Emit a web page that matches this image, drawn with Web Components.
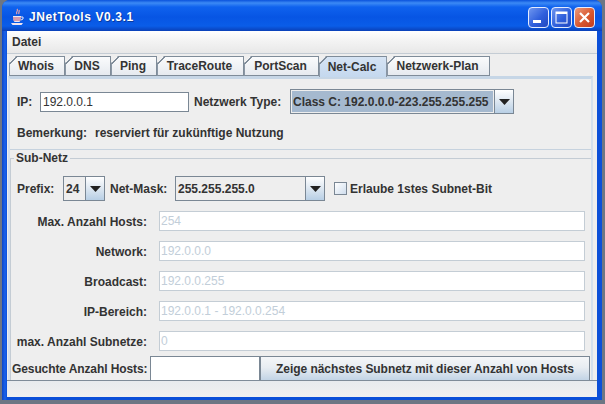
<!DOCTYPE html>
<html>
<head>
<meta charset="utf-8">
<style>
  html, body { margin: 0; height: 100%; }
  body { width: 605px; height: 404px; overflow: hidden; background: #6d7684; font: bold 12px "Liberation Sans", Arial, sans-serif; color: #333; }
</style>
</head>
<body>
<jn-window label="JNetTools V0.3.1">
  <jn-menubar>Datei</jn-menubar>
  <jn-tabs>
    <jn-tab w="56">Whois</jn-tab>
    <jn-tab w="46">DNS</jn-tab>
    <jn-tab w="46">Ping</jn-tab>
    <jn-tab w="87">TraceRoute</jn-tab>
    <jn-tab w="75">PortScan</jn-tab>
    <jn-tab w="68" selected>Net-Calc</jn-tab>
    <jn-tab w="103">Netzwerk-Plan</jn-tab>
  </jn-tabs>
  <jn-netcalc></jn-netcalc>
  <jn-statusbar></jn-statusbar>
</jn-window>

<script>
// title bar + window frame
class JnWindow extends HTMLElement {
  constructor() {
    super();
    const root = this.attachShadow({ mode: "open" });
    root.innerHTML = `
      <style>
        :host { display: flex; flex-direction: column; box-sizing: border-box; width: 600px; height: 400px; margin-left: 2px;
          background: linear-gradient(90deg, #0b46c8 0, #1a63ea 3px, #0b4fd8 5px, #0b4fd8 100%); border-radius: 8px 8px 0 0; padding: 0 5px 3px 5px; }
        .bar { height: 31px; flex: none; margin: 0 -5px; padding: 3px 7px 0 8px; box-sizing: border-box; display: flex; align-items: center; gap: 4px; border-radius: 8px 8px 0 0;
          background: linear-gradient(180deg, #0a52dc 0, #3c8af5 3px, #0f62ee 7px, #0755e4 17px, #0a5de8 26px, #0a40b8 31px); }
        .title { color: #fff; font: bold 12px "Liberation Sans", Arial, sans-serif; letter-spacing: .6px; flex: 1; text-shadow: 1px 1px 0 #0a3a9c; }
        .btn { width: 21px; height: 21px; box-sizing: border-box; border: 1px solid #e4ecff; border-radius: 4px; display: flex; margin-left: -2px;
          background: linear-gradient(135deg, #6f96ef, #2f5fdc 55%, #2148c0); }
        .btn.close { background: linear-gradient(135deg, #eb9a7c, #d9582f 55%, #c13c1e); }
        svg { display: block; }
        .client { flex: 1; min-height: 0; display: flex; flex-direction: column; background: #eee; overflow: hidden; }
      </style>
      <div class="bar">
        <svg width="15" height="18" viewBox="0 0 15 18">
          <path d="M7 1c2 2-2 3 0 5M9 2c1 2-1 2 0 4" fill="none" stroke="#e8a0a8" stroke-width="1.2"/>
          <path d="M3 8h8v1c0 3-1 5-2 5H5c-1 0-2-2-2-5z" fill="#e9e6f4"/>
          <path d="M3 10h8M3.5 12h7" stroke="#c0506a" stroke-width="1"/>
          <path d="M1 15h12l-1.500 2h-9z" fill="#f2e4ee"/>
          <path d="M11 9h2v2l-2 1" fill="none" stroke="#e9e6f4"/>
        </svg>
        <span class="title">${this.getAttribute("label")}</span>
        <span class="btn"><svg width="19" height="19"><rect x="4" y="12" width="8" height="3" fill="#fff"/></svg></span>
        <span class="btn"><svg width="19" height="19"><rect x="4" y="4" width="11" height="11" fill="none" stroke="#fff" stroke-width="1"/><rect x="4" y="4" width="11" height="2" fill="#fff"/></svg></span>
        <span class="btn close"><svg width="19" height="19"><path d="M5 5l9 9M14 5l-9 9" stroke="#fff" stroke-width="2.200"/></svg></span>
      </div>
      <div class="client"><slot></slot></div>`;
  }
}
customElements.define("jn-window", JnWindow);

class JnMenubar extends HTMLElement {
  constructor() {
    super();
    this.attachShadow({ mode: "open" }).innerHTML = `
      <style>
        :host { display: flex; align-items: center; flex: none; height: 23px; box-sizing: border-box; padding: 0 0 1px 5px;
          background: linear-gradient(180deg, #fff, #f4f4f4 40%, #e8e8e8); border-bottom: 1px solid #c4ccd4; }
      </style>
      <slot></slot>`;
  }
}
customElements.define("jn-menubar", JnMenubar);

class JnTabs extends HTMLElement {
  constructor() {
    super();
    this.attachShadow({ mode: "open" }).innerHTML = `
      <style>
        :host { display: flex; flex: none; height: 22px; box-sizing: border-box; padding: 2px 0 0 2px; }
      </style>
      <slot></slot>`;
  }
}
customElements.define("jn-tabs", JnTabs);

class JnTab extends HTMLElement {
  constructor() {
    super();
    const sel = this.hasAttribute("selected");
    this.attachShadow({ mode: "open" }).innerHTML = `
      <style>
        :host { display: block; width: ${this.getAttribute("w")}px; height: 20px; }
        .tab { height: 100%; box-sizing: border-box; display: flex; align-items: center; justify-content: center; position: relative; padding-right: 2px;
          border: 1px solid #7f8c99; border-left-color: #8a97a5; ${sel ? "border-bottom: 0; height: 21px; border-right: 1px solid #8a97a5;" : ""}
          clip-path: polygon(7px 0, 100% 0, 100% 100%, 0 100%, 0 7px);
          background: ${sel ? "linear-gradient(180deg, #d6e4f4, #c4d8ee)" : "linear-gradient(180deg, #fafbfc, #e6eaef)"}; }
        .tab::before { content: ""; position: absolute; left: -1px; top: -1px; width: 8px; height: 8px;
          background: linear-gradient(135deg, transparent 47%, #7f8c99 47%, #7f8c99 62%, transparent 62%); }
      </style>
      <div class="tab"><slot></slot></div>`;
  }
}
customElements.define("jn-tab", JnTab);

// plain text field, enabled or greyed
class JnField extends HTMLElement {
  constructor() {
    super();
    const off = this.hasAttribute("disabled");
    this.attachShadow({ mode: "open" }).innerHTML = `
      <style>
        :host { display: flex; align-items: center; box-sizing: border-box; height: ${this.getAttribute("h") || 20}px; background: #fff; padding-left: ${off ? 1 : 2}px;
          border: 1px solid ${off ? "#c4cdd5" : "#7a8794"}; font: 12px "Liberation Sans", Arial, sans-serif; color: ${off ? "#c2ced9" : "#333"}; }
      </style>
      <slot></slot>`;
  }
}
customElements.define("jn-field", JnField);

class JnCombo extends HTMLElement {
  constructor() {
    super();
    const hi = this.hasAttribute("highlight");
    this.attachShadow({ mode: "open" }).innerHTML = `
      <style>
        :host { display: flex; box-sizing: border-box; width: ${this.getAttribute("w")}px; height: 25px; border: 1px solid #7a8794; background: #eee; flex: none; }
        .val { flex: 1; display: flex; align-items: center; padding-left: 1px; margin: 1px; ${hi ? "background: #a5b9cf;" : ""} white-space: nowrap; overflow: hidden; }
        .arrow { width: 19px; flex: none; box-sizing: border-box; border-left: 1px solid #7a8794; display: flex; align-items: center; justify-content: center;
          background: linear-gradient(180deg, #fff, #e0e9f2 45%, #b8cfe5); }
        svg { display: block; }
      </style>
      <div class="val"><slot></slot></div>
      <div class="arrow"><svg width="11" height="6"><path d="M0 0h11L5.500 6z" fill="#222"/></svg></div>`;
  }
}
customElements.define("jn-combo", JnCombo);

class JnCheck extends HTMLElement {
  constructor() {
    super();
    this.attachShadow({ mode: "open" }).innerHTML = `
      <style>
        :host { display: flex; align-items: center; gap: 3px; }
        .box { width: 13px; height: 13px; box-sizing: border-box; border: 1px solid #7a8794; background: linear-gradient(135deg, #fff, #cfdded); }
      </style>
      <div class="box"></div><slot></slot>`;
  }
}
customElements.define("jn-check", JnCheck);

class JnButton extends HTMLElement {
  constructor() {
    super();
    this.attachShadow({ mode: "open" }).innerHTML = `
      <style>
        :host { display: flex; align-items: center; justify-content: center; box-sizing: border-box; border: 1px solid #7a8794; border-bottom: 0; letter-spacing: -.05px;
          background: linear-gradient(180deg, #f4f6f8, #e8edf2 45%, #c2d4e6); padding-top: 1px; }
      </style>
      <slot></slot>`;
  }
}
customElements.define("jn-button", JnButton);

class JnStatusbar extends HTMLElement {
  constructor() {
    super();
    this.attachShadow({ mode: "open" }).innerHTML = `
      <style>
        :host { display: block; flex: none; height: 17px; box-sizing: border-box; border-top: 1px solid #7f8c99; background: linear-gradient(180deg, #e8ebee, #f0f0f0); }
      </style>`;
  }
}
customElements.define("jn-statusbar", JnStatusbar);

// the Net-Calc tab page
class JnNetcalc extends HTMLElement {
  constructor() {
    super();
    const rows = [
      ["Max. Anzahl Hosts:", "254"],
      ["Network:", "192.0.0.0"],
      ["Broadcast:", "192.0.0.255"],
      ["IP-Bereich:", "192.0.0.1 - 192.0.0.254"],
      ["max. Anzahl Subnetze:", "0"],
    ];
    this.attachShadow({ mode: "open" }).innerHTML = `
      <style>
        :host { display: block; flex: 1; min-height: 0; overflow: hidden; border-top: 3px solid #c6d6e6; margin-left: 1px; margin-right: 4px; border-left: 2px solid #d4e0ec; border-right: 2px solid #d4e0ec; box-sizing: border-box; }
        .top { height: 71px; box-sizing: border-box; padding: 10px 0 0 7px; border-bottom: 1px solid #c6d2de; }
        .row { display: flex; align-items: center; }
        .row span { white-space: nowrap; flex: none; }
        .r1 { height: 25px; }
        .r2 { margin-top: 7px; height: 24px; }
        fieldset { margin: 1px 0 0 0; padding: 0 0 0 1px; border: 1px solid #c4ccd4; border-bottom: 0; min-width: 0; width: 583px; box-sizing: border-box; }
        legend { padding: 0 2px; margin-left: 2px; line-height: 14px; }
        .prefix { padding: 11px 0 0 5px; height: 25px; }
        .grid { display: grid; grid-template-columns: 135px 426px; column-gap: 12px; row-gap: 10px; margin-top: 10px; align-items: center; }
        .grid span { text-align: right; padding-top: 1px; }
        .last { display: flex; height: 24px; margin-top: 5px; align-items: stretch; }
        .last span { width: 138px; flex: none; align-self: center; white-space: nowrap; padding-top: 1px; letter-spacing: -.1px; }
        jn-field.find { width: 110px; border-bottom: 0; }
        jn-button { width: 330px; }
      </style>
      <div class="top">
        <div class="row r1">
          <span style="width:23px">IP:</span>
          <jn-field h="20" style="width:149px">192.0.0.1</jn-field>
          <span style="width:96px;margin-left:5px">Netzwerk Type:</span>
          <jn-combo w="224" highlight>Class C: 192.0.0.0-223.255.255.255</jn-combo>
        </div>
        <div class="row r2"><span style="width:78px">Bemerkung:</span><span>reserviert für zukünftige Nutzung</span></div>
      </div>
      <fieldset>
        <legend>Sub-Netz</legend>
        <div class="row prefix">
          <span style="width:46px">Prefix:</span>
          <jn-combo w="42">24</jn-combo>
          <span style="width:60px;margin-left:5px">Net-Mask:</span>
          <jn-combo w="150" style="margin-left:5px">255.255.255.0</jn-combo>
          <jn-check style="margin-left:9px">Erlaube 1stes Subnet-Bit</jn-check>
        </div>
        <div class="grid">
          ${rows.map(r => `<span>${r[0]}</span><jn-field disabled>${r[1]}</jn-field>`).join("")}
        </div>
        <div class="last">
          <span>Gesuchte Anzahl Hosts:</span>
          <jn-field class="find" h="24"></jn-field>
          <jn-button>Zeige nächstes Subnetz mit dieser Anzahl von Hosts</jn-button>
        </div>
      </fieldset>`;
  }
}
customElements.define("jn-netcalc", JnNetcalc);
</script>
</body>
</html>
